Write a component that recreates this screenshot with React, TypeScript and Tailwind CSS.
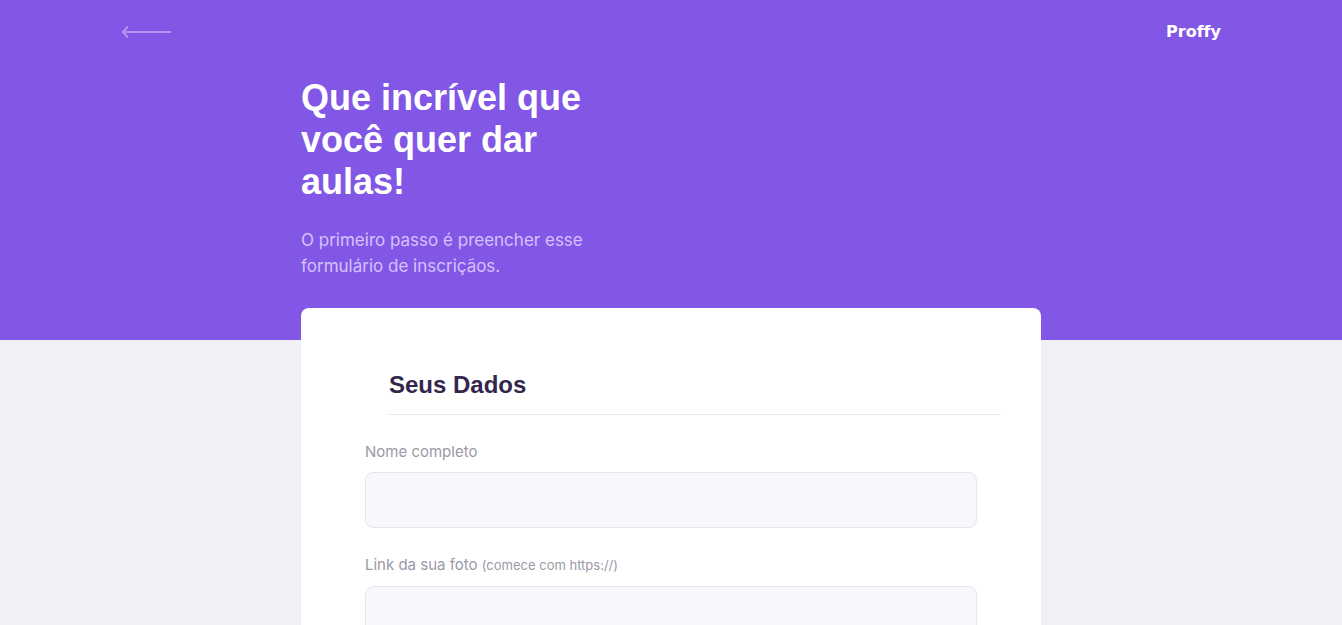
import type { ReactNode } from 'react';

function BackArrow() {
  return (
    <svg
      width="50"
      height="14"
      viewBox="0 0 50 14"
      fill="none"
      stroke="#b494f0"
      strokeWidth="2"
      strokeLinejoin="round"
      aria-hidden="true"
    >
      <path d="M50 7H2.500M7 1.500L2 7l5 5.500" />
    </svg>
  );
}

function TopBar() {
  return (
    <div className="mx-auto flex h-16 w-full max-w-[1100px] items-center justify-between">
      <a href="/" aria-label="Voltar">
        <BackArrow />
      </a>
      <span className="font-['DejaVu_Sans',sans-serif] text-base leading-4 font-bold text-white [font-variant-ligatures:none]">
        Proffy
      </span>
    </div>
  );
}

type FieldProps = { id: string; type?: string; children: ReactNode };

function Field({ id, type = 'text', children }: FieldProps) {
  return (
    <div>
      <label htmlFor={id} className="block text-[15px] leading-[25px] text-[#9c98a6]">
        {children}
      </label>
      <input
        id={id}
        name={id}
        type={type}
        className="mt-2 block h-14 w-full rounded-lg border border-[#e6e6f0] bg-[#f8f8fc] px-4 text-base text-[#32264d] outline-none focus:border-[#8257e5]"
      />
    </div>
  );
}

export default function App() {
  return (
    <div className="min-h-screen bg-[#f0f0f7] font-[Inter,sans-serif]">
      <header className="h-[340px] bg-[#8257e5]">
        <TopBar />
        <div className="mx-auto max-w-[740px] pt-[13px]">
          <div className="max-w-[350px]">
            <h1 className="font-['Liberation_Sans',sans-serif] text-4xl leading-[42px] font-bold text-white">
              Que incrível que você quer dar aulas!
            </h1>
            <p className="mt-6 max-w-[300px] text-[17px] leading-[26px] text-[#d4c2ff]">
              O primeiro passo é preencher esse formulário de inscriçãos.
            </p>
          </div>
        </div>
      </header>
      <main className="mx-auto -mt-8 max-w-[740px] rounded-t-lg bg-white px-16 pt-16">
        <form>
          <section aria-labelledby="dados">
            <h2
              id="dados"
              className="-mr-6 ml-6 border-b border-[#e6e6f0] pb-4 font-['Liberation_Sans',sans-serif] text-2xl leading-[26px] font-bold text-[#32264d]"
            >
              Seus Dados
            </h2>
            <div className="mt-6 flex flex-col gap-6">
              <Field id="name">Nome completo</Field>
              <Field id="avatar" type="url">
                Link da sua foto <small className="text-[13px]">(comece com https://)</small>
              </Field>
            </div>
          </section>
        </form>
      </main>
    </div>
  );
}
